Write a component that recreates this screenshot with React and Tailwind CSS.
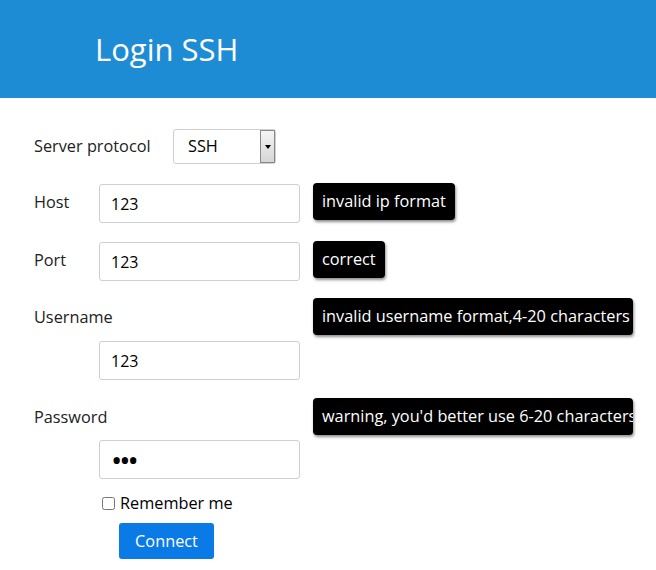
import { useState } from "react";

const FONT = { fontFamily: '"Open Sans", "Noto Sans", sans-serif' };

function Tip({ children }) {
  return (
    <div className="h-[37px] max-w-[320px] overflow-hidden whitespace-nowrap rounded-[4px] bg-black px-[9px] text-[16.3px] leading-[37px] text-white shadow-[1px_2px_3px_rgba(0,0,0,0.45)]">
      {children}
    </div>
  );
}

function Field({ type = "text", value }) {
  return (
    <input
      type={type}
      defaultValue={value}
      className={
        "h-[39px] w-[201px] rounded-[3px] border border-[#cfcfcf] px-[11px] text-black outline-none " +
        (type === "password" ? "text-[30px] tracking-[-3px]" : "text-[16px]")
      }
    />
  );
}

export default function App() {
  const [remember, setRemember] = useState(false);

  return (
    <div className="min-h-[570px] w-[656px] bg-white text-[16.3px] text-[#222]" style={FONT}>
      {/* header */}
      <div className="flex h-[98px] items-center bg-[#1e8cd4] pl-[95px]">
        <h1 className="text-[31px] font-normal text-white">Login SSH</h1>
      </div>

      <div className="flex flex-col pl-[34px] pt-[31px]">
        {/* protocol */}
        <div className="flex h-[35px] items-center">
          <span className="w-[139px]">Server protocol</span>
          <div className="flex h-[35px] w-[103px] items-stretch rounded-[3px] border border-[#cfcfcf] bg-white">
            <span className="flex-1 pl-[14px] leading-[33px] text-black">SSH</span>
            <span className="flex w-[15px] items-center justify-center border border-[#888] bg-gradient-to-b from-[#f4f4f4] to-[#d6d6d6]">
              <span className="h-0 w-0 border-x-[3px] border-t-[4px] border-x-transparent border-t-black" />
            </span>
          </div>
        </div>

        {/* host */}
        <div className="mt-[20px] flex items-start">
          <span className="w-[65px] pt-[6px]">Host</span>
          <Field value="123" />
          <div className="ml-[13px] -mt-px">
            <Tip>invalid ip format</Tip>
          </div>
        </div>

        {/* port */}
        <div className="mt-[19px] flex items-start">
          <span className="w-[65px] pt-[6px]">Port</span>
          <Field value="123" />
          <div className="ml-[13px] -mt-px">
            <Tip>correct</Tip>
          </div>
        </div>

        {/* username */}
        <div className="mt-[17px] flex items-start">
          <span className="w-[279px] pt-[7px]">Username</span>
          <Tip>invalid username format,4-20 characters</Tip>
        </div>
        <div className="mt-[6px] pl-[65px]">
          <Field value="123" />
        </div>

        {/* password */}
        <div className="mt-[18px] flex items-start">
          <span className="w-[279px] pt-[7px]">Password</span>
          <Tip>warning, you'd better use 6-20 characters</Tip>
        </div>
        <div className="mt-[5px] pl-[65px]">
          <Field type="password" value="123" />
        </div>

        {/* remember */}
        <label className="mt-[12px] flex items-center pl-[68px] text-black">
          <input
            type="checkbox"
            checked={remember}
            onChange={(e) => setRemember(e.target.checked)}
            className="m-0 mr-[5px] h-[13px] w-[13px]"
          />
          Remember me
        </label>

        <div className="mt-[8px] pl-[85px]">
          <button className="h-[36px] w-[95px] rounded-[3px] bg-[#0a7ae6] text-[16.3px] text-white">
            Connect
          </button>
        </div>
      </div>
    </div>
  );
}
